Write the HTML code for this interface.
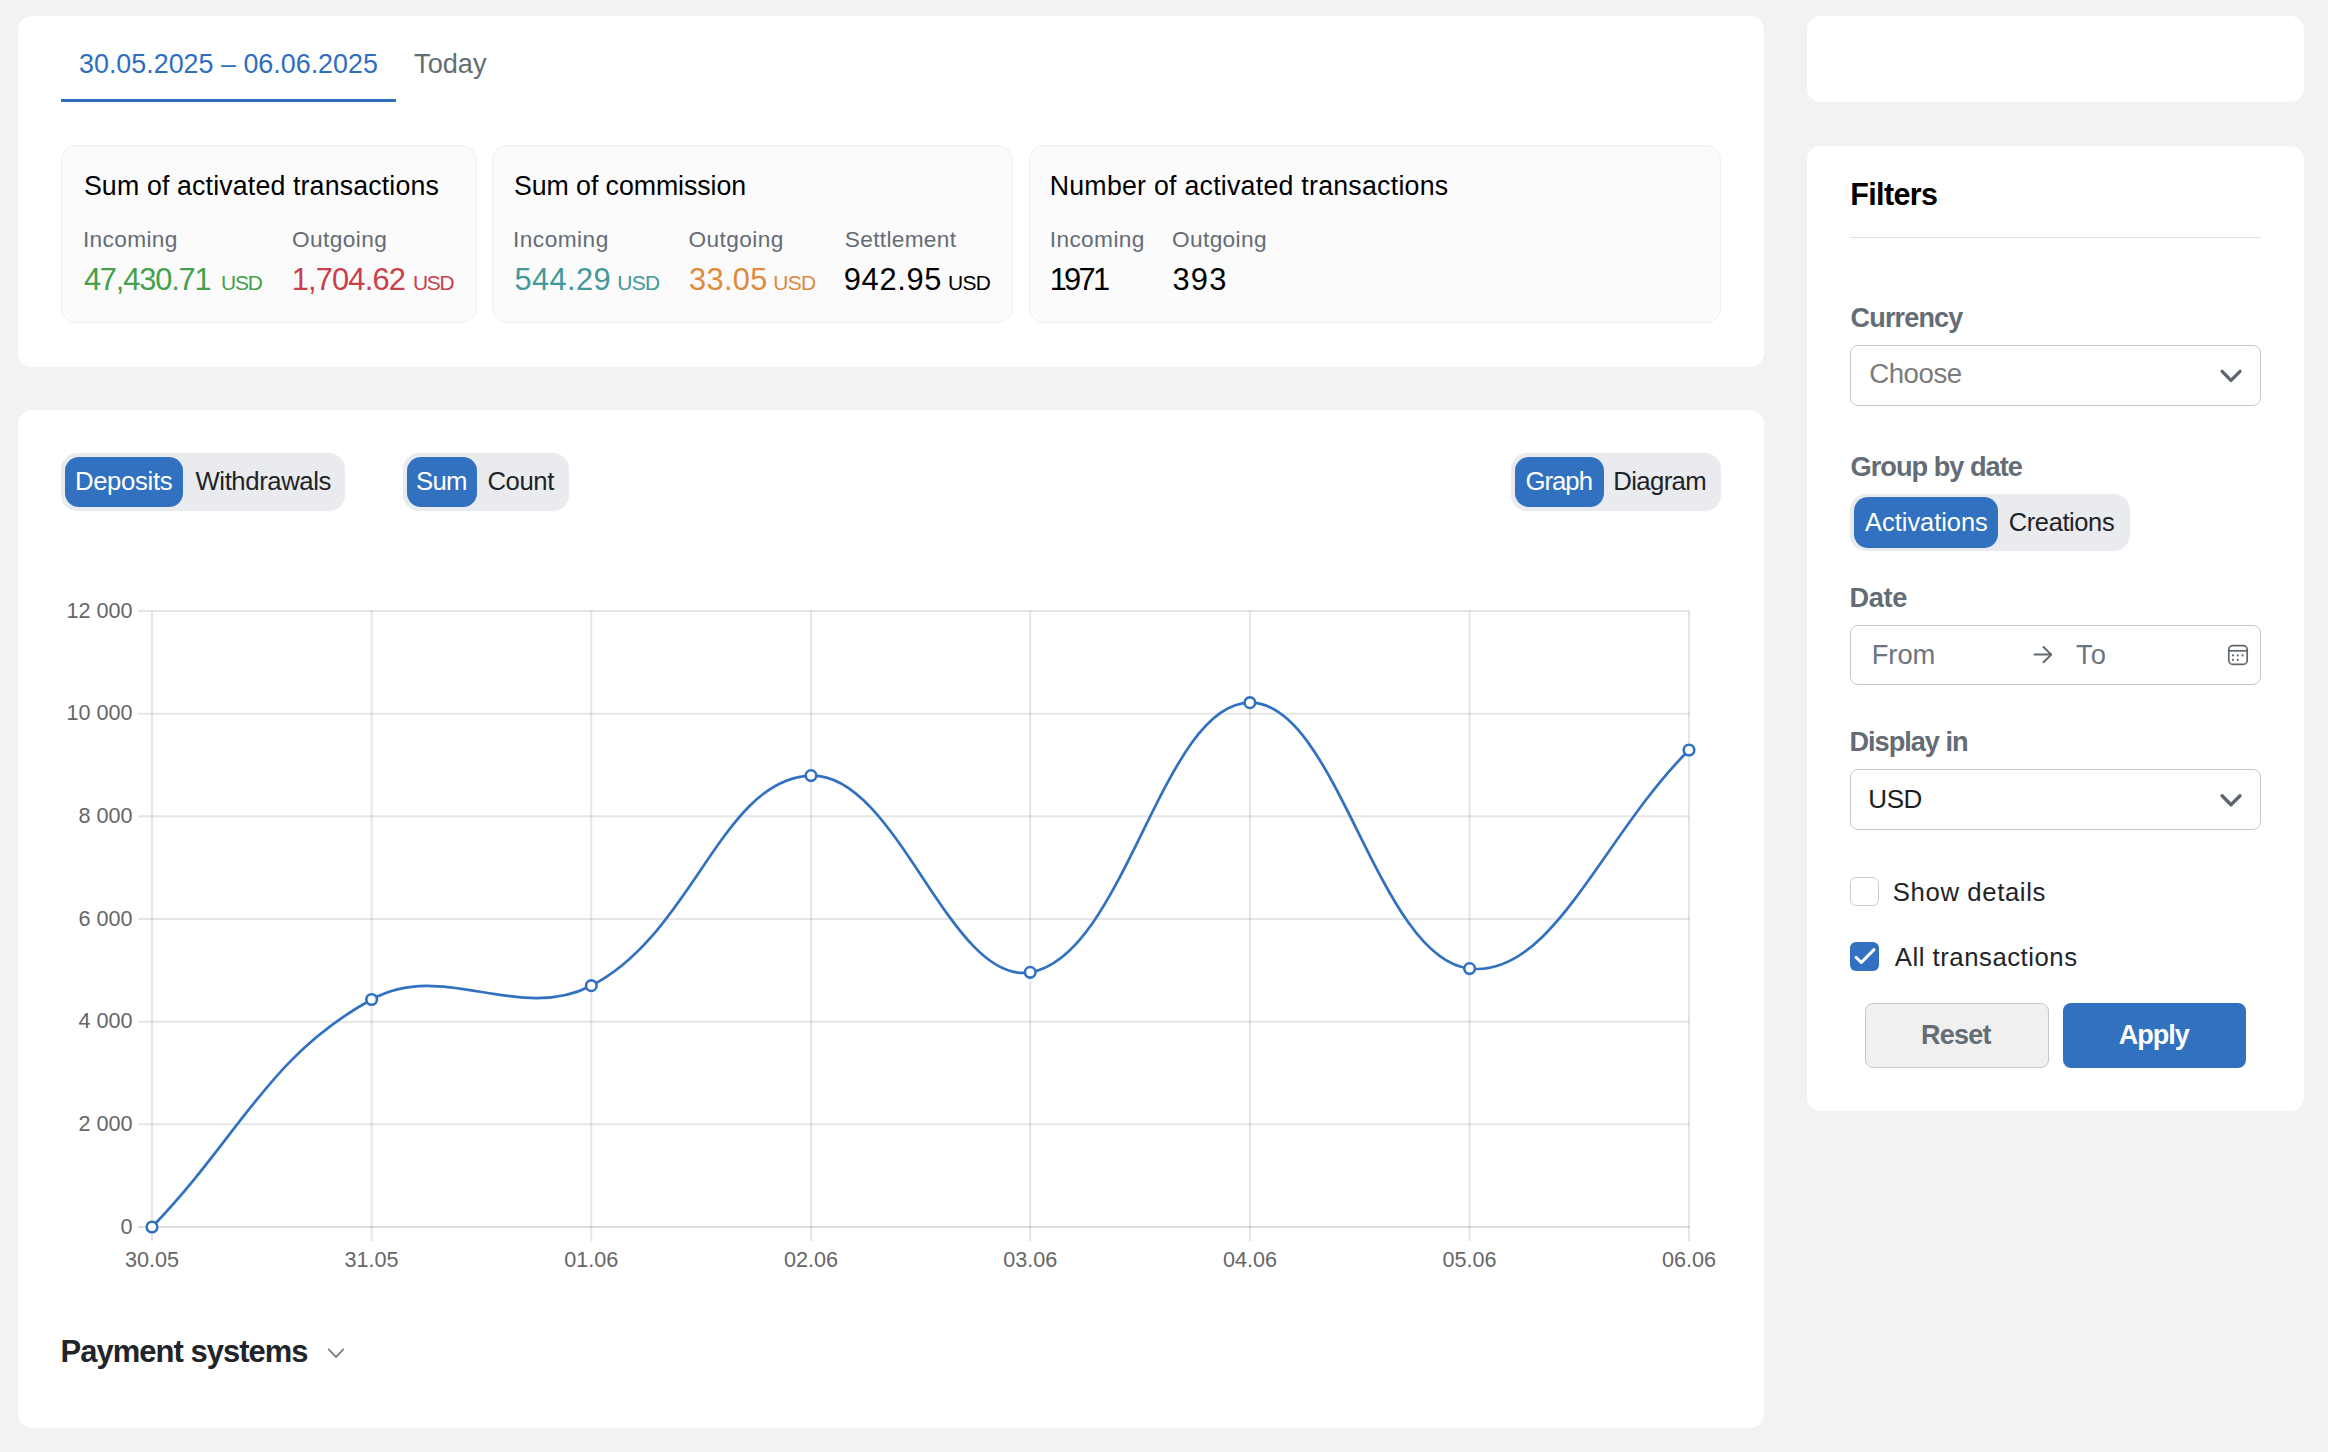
<!DOCTYPE html>
<html><head><meta charset="utf-8"><style>
html,body{margin:0;padding:0;width:2328px;height:1452px;overflow:hidden;background:#f1f2f4;}
body{position:relative;font-family:"Liberation Sans",sans-serif;line-height:1;white-space:nowrap;}
div{white-space:nowrap}
@media (max-width:1500px){html{zoom:0.5}}
</style></head><body>
<div style="position:absolute;left:18px;top:16px;width:1746px;height:351px;background:#fff;border-radius:14px;"></div>
<div style="position:absolute;left:18px;top:410px;width:1746px;height:1018px;background:#fff;border-radius:14px;"></div>
<div style="position:absolute;left:1807px;top:16px;width:497px;height:86px;background:#fff;border-radius:14px;"></div>
<div style="position:absolute;left:1807px;top:146px;width:497px;height:965px;background:#fff;border-radius:14px;"></div>
<div style="position:absolute;left:61px;top:99px;width:335px;height:3px;background:#2f6ebf;border-radius:0px;"></div>
<div style="position:absolute;left:61px;top:145px;width:416px;height:178px;background:#fbfbfc;border-radius:15px;box-sizing:border-box;border:1.5px solid #eeeff1;"></div>
<div style="position:absolute;left:492px;top:145px;width:521px;height:178px;background:#fbfbfc;border-radius:15px;box-sizing:border-box;border:1.5px solid #eeeff1;"></div>
<div style="position:absolute;left:1028.5px;top:145px;width:692.5px;height:178px;background:#fbfbfc;border-radius:15px;box-sizing:border-box;border:1.5px solid #eeeff1;"></div>
<div style="position:absolute;left:61px;top:453px;width:284px;height:58px;background:#e9ebef;border-radius:16px;"></div>
<div style="position:absolute;left:403px;top:453px;width:166px;height:58px;background:#e9ebef;border-radius:16px;"></div>
<div style="position:absolute;left:1511px;top:453px;width:210px;height:58px;background:#e9ebef;border-radius:16px;"></div>
<div style="position:absolute;left:1850px;top:494px;width:280px;height:57px;background:#e9ebef;border-radius:16px;"></div>
<div style="position:absolute;left:65px;top:457px;width:118px;height:50px;background:#3171c0;border-radius:14px;"></div>
<div style="position:absolute;left:407px;top:457px;width:70px;height:50px;background:#3171c0;border-radius:14px;"></div>
<div style="position:absolute;left:1515px;top:457px;width:89px;height:50px;background:#3171c0;border-radius:14px;"></div>
<div style="position:absolute;left:1854px;top:497px;width:144px;height:51px;background:#3171c0;border-radius:14px;"></div>
<div style="position:absolute;left:1850px;top:237px;width:411px;height:1.2px;background:#dde0e4;border-radius:0px;"></div>
<div style="position:absolute;left:1850px;top:345px;width:411px;height:61px;background:#fff;border-radius:8px;box-sizing:border-box;border:1.6px solid #c3c8ce;"></div>
<div style="position:absolute;left:1850px;top:625px;width:411px;height:60px;background:#fff;border-radius:8px;box-sizing:border-box;border:1.6px solid #c3c8ce;"></div>
<div style="position:absolute;left:1850px;top:769px;width:411px;height:61px;background:#fff;border-radius:8px;box-sizing:border-box;border:1.6px solid #c3c8ce;"></div>
<div style="position:absolute;left:1850px;top:877px;width:29px;height:29px;background:#fff;border-radius:6px;box-sizing:border-box;border:1.6px solid #c8ccd2;"></div>
<div style="position:absolute;left:1850px;top:942px;width:29px;height:29px;background:#3171c0;border-radius:6px;"></div>
<div style="position:absolute;left:1865px;top:1003px;width:184px;height:64.5px;background:#f0f0f1;border-radius:8px;box-sizing:border-box;border:1.6px solid #c3c7cd;"></div>
<div style="position:absolute;left:2063px;top:1003px;width:183px;height:64.5px;background:#3171c0;border-radius:8px;"></div>
<svg style="position:absolute;left:0;top:0" width="2328" height="1452">
<polyline points="2222.1,371.4 2231,380.4 2240,371.4" fill="none" stroke="#5d656e" stroke-width="3.4" stroke-linecap="round" stroke-linejoin="round"/>
<polyline points="2222.1,795.8 2231,804.8 2240,795.8" fill="none" stroke="#5d656e" stroke-width="3.4" stroke-linecap="round" stroke-linejoin="round"/>
<polyline points="328.8,1349.5 336,1357 343.2,1349.5" fill="none" stroke="#6c737b" stroke-width="1.8" stroke-linecap="round" stroke-linejoin="round"/>
<g fill="none" stroke="#5f666d" stroke-width="2" stroke-linecap="round" stroke-linejoin="round"><line x1="2034.5" y1="654.6" x2="2051" y2="654.6"/><polyline points="2043.5,647 2051.2,654.6 2043.5,662.2"/></g>
<g fill="none" stroke="#5f666d" stroke-width="1.7"><rect x="2228.8" y="645.6" width="18.4" height="18.8" rx="4"/><line x1="2228.8" y1="650.8" x2="2247.2" y2="650.8"/></g>
<circle cx="2233" cy="655.4" r="1.05" fill="#5f666d"/>
<circle cx="2237.8" cy="655.4" r="1.05" fill="#5f666d"/>
<circle cx="2242.6" cy="655.4" r="1.05" fill="#5f666d"/>
<circle cx="2233" cy="659.9" r="1.05" fill="#5f666d"/>
<circle cx="2237.8" cy="659.9" r="1.05" fill="#5f666d"/>
<polyline points="1856,957.3 1861.3,962.5 1874,949.6" fill="none" stroke="#fff" stroke-width="3" stroke-linecap="round" stroke-linejoin="round"/>
<line x1="138" y1="611.0" x2="1689" y2="611.0" stroke="rgba(0,0,0,0.1)" stroke-width="2"/>
<line x1="138" y1="713.6666666666666" x2="1689" y2="713.6666666666666" stroke="rgba(0,0,0,0.1)" stroke-width="2"/>
<line x1="138" y1="816.3333333333334" x2="1689" y2="816.3333333333334" stroke="rgba(0,0,0,0.1)" stroke-width="2"/>
<line x1="138" y1="919.0" x2="1689" y2="919.0" stroke="rgba(0,0,0,0.1)" stroke-width="2"/>
<line x1="138" y1="1021.6666666666667" x2="1689" y2="1021.6666666666667" stroke="rgba(0,0,0,0.1)" stroke-width="2"/>
<line x1="138" y1="1124.3333333333335" x2="1689" y2="1124.3333333333335" stroke="rgba(0,0,0,0.1)" stroke-width="2"/>
<line x1="138" y1="1227.0" x2="1689" y2="1227.0" stroke="rgba(0,0,0,0.14)" stroke-width="2"/>
<line x1="152" y1="611" x2="152" y2="1241" stroke="rgba(0,0,0,0.1)" stroke-width="2"/>
<line x1="371.6" y1="611" x2="371.6" y2="1241" stroke="rgba(0,0,0,0.1)" stroke-width="2"/>
<line x1="591.3" y1="611" x2="591.3" y2="1241" stroke="rgba(0,0,0,0.1)" stroke-width="2"/>
<line x1="811" y1="611" x2="811" y2="1241" stroke="rgba(0,0,0,0.1)" stroke-width="2"/>
<line x1="1030.2" y1="611" x2="1030.2" y2="1241" stroke="rgba(0,0,0,0.1)" stroke-width="2"/>
<line x1="1249.9" y1="611" x2="1249.9" y2="1241" stroke="rgba(0,0,0,0.1)" stroke-width="2"/>
<line x1="1469.6" y1="611" x2="1469.6" y2="1241" stroke="rgba(0,0,0,0.1)" stroke-width="2"/>
<line x1="1689" y1="611" x2="1689" y2="1241" stroke="rgba(0,0,0,0.1)" stroke-width="2"/>
<path d="M152,1227 C239.84,1136.00 268.00,1056.40 371.6,999.5 C443.72,959.88 517.48,1023.32 591.3,985.7 C693.24,933.76 721.83,778.32 811,775.6 C897.39,772.96 949.70,985.67 1030.2,972.3 C1125.26,956.51 1161.66,703.44 1249.9,702.7 C1337.42,701.96 1377.06,958.63 1469.6,968.6 C1552.70,977.55 1601.24,837.44 1689,750" fill="none" stroke="#3171c0" stroke-width="2.7"/>
<circle cx="152" cy="1227" r="5.3" fill="#fff" stroke="#3171c0" stroke-width="2.6"/>
<circle cx="371.6" cy="999.5" r="5.3" fill="#fff" stroke="#3171c0" stroke-width="2.6"/>
<circle cx="591.3" cy="985.7" r="5.3" fill="#fff" stroke="#3171c0" stroke-width="2.6"/>
<circle cx="811" cy="775.6" r="5.3" fill="#fff" stroke="#3171c0" stroke-width="2.6"/>
<circle cx="1030.2" cy="972.3" r="5.3" fill="#fff" stroke="#3171c0" stroke-width="2.6"/>
<circle cx="1249.9" cy="702.7" r="5.3" fill="#fff" stroke="#3171c0" stroke-width="2.6"/>
<circle cx="1469.6" cy="968.6" r="5.3" fill="#fff" stroke="#3171c0" stroke-width="2.6"/>
<circle cx="1689" cy="750" r="5.3" fill="#fff" stroke="#3171c0" stroke-width="2.6"/>
<text x="132.5" y="617.8" text-anchor="end" font-family="Liberation Sans" font-size="21.6" fill="#666666">12 000</text>
<text x="132.5" y="720.4666666666666" text-anchor="end" font-family="Liberation Sans" font-size="21.6" fill="#666666">10 000</text>
<text x="132.5" y="823.1333333333333" text-anchor="end" font-family="Liberation Sans" font-size="21.6" fill="#666666">8 000</text>
<text x="132.5" y="925.8" text-anchor="end" font-family="Liberation Sans" font-size="21.6" fill="#666666">6 000</text>
<text x="132.5" y="1028.4666666666667" text-anchor="end" font-family="Liberation Sans" font-size="21.6" fill="#666666">4 000</text>
<text x="132.5" y="1131.1333333333334" text-anchor="end" font-family="Liberation Sans" font-size="21.6" fill="#666666">2 000</text>
<text x="132.5" y="1233.8" text-anchor="end" font-family="Liberation Sans" font-size="21.6" fill="#666666">0</text>
<text x="152" y="1267" text-anchor="middle" font-family="Liberation Sans" font-size="21.6" fill="#666666">30.05</text>
<text x="371.6" y="1267" text-anchor="middle" font-family="Liberation Sans" font-size="21.6" fill="#666666">31.05</text>
<text x="591.3" y="1267" text-anchor="middle" font-family="Liberation Sans" font-size="21.6" fill="#666666">01.06</text>
<text x="811" y="1267" text-anchor="middle" font-family="Liberation Sans" font-size="21.6" fill="#666666">02.06</text>
<text x="1030.2" y="1267" text-anchor="middle" font-family="Liberation Sans" font-size="21.6" fill="#666666">03.06</text>
<text x="1249.9" y="1267" text-anchor="middle" font-family="Liberation Sans" font-size="21.6" fill="#666666">04.06</text>
<text x="1469.6" y="1267" text-anchor="middle" font-family="Liberation Sans" font-size="21.6" fill="#666666">05.06</text>
<text x="1689" y="1267" text-anchor="middle" font-family="Liberation Sans" font-size="21.6" fill="#666666">06.06</text>
</svg>
<div style="position:absolute;left:79.00px;top:51.00px;font-size:26.890px;font-weight:400;letter-spacing:0.000px;color:#2f6ebf">30.05.2025 – 06.06.2025</div>
<div style="position:absolute;left:414.10px;top:49.90px;font-size:27.181px;font-weight:400;letter-spacing:-0.025px;color:#656c74">Today</div>
<div style="position:absolute;left:83.90px;top:172.70px;font-size:26.745px;font-weight:400;letter-spacing:0.150px;color:#000000">Sum of activated transactions</div>
<div style="position:absolute;left:82.90px;top:228.00px;font-size:22.675px;font-weight:400;letter-spacing:0.371px;color:#646c75">Incoming</div>
<div style="position:absolute;left:291.90px;top:228.00px;font-size:22.675px;font-weight:400;letter-spacing:0.414px;color:#646c75">Outgoing</div>
<div style="position:absolute;left:83.90px;top:265.00px;font-size:30.814px;font-weight:400;letter-spacing:-1.150px;color:#45a04b">47,430.71</div>
<div style="position:absolute;left:220.90px;top:273.00px;font-size:20.931px;font-weight:400;letter-spacing:-1.100px;color:#45a04b">USD</div>
<div style="position:absolute;left:291.70px;top:265.00px;font-size:30.814px;font-weight:400;letter-spacing:-0.814px;color:#c9404b">1,704.62</div>
<div style="position:absolute;left:412.90px;top:273.00px;font-size:20.931px;font-weight:400;letter-spacing:-1.200px;color:#c9404b">USD</div>
<div style="position:absolute;left:514.00px;top:172.70px;font-size:26.745px;font-weight:400;letter-spacing:-0.075px;color:#000000">Sum of commission</div>
<div style="position:absolute;left:513.00px;top:228.00px;font-size:22.675px;font-weight:400;letter-spacing:0.471px;color:#646c75">Incoming</div>
<div style="position:absolute;left:688.40px;top:228.00px;font-size:22.675px;font-weight:400;letter-spacing:0.429px;color:#646c75">Outgoing</div>
<div style="position:absolute;left:844.80px;top:228.00px;font-size:22.675px;font-weight:400;letter-spacing:0.322px;color:#646c75">Settlement</div>
<div style="position:absolute;left:514.50px;top:265.00px;font-size:30.814px;font-weight:400;letter-spacing:0.400px;color:#42999a">544.29</div>
<div style="position:absolute;left:617.20px;top:273.00px;font-size:20.931px;font-weight:400;letter-spacing:-0.650px;color:#42999a">USD</div>
<div style="position:absolute;left:689.00px;top:265.00px;font-size:30.814px;font-weight:400;letter-spacing:0.325px;color:#dd8a3d">33.05</div>
<div style="position:absolute;left:773.30px;top:273.00px;font-size:20.931px;font-weight:400;letter-spacing:-0.650px;color:#dd8a3d">USD</div>
<div style="position:absolute;left:843.80px;top:265.00px;font-size:30.814px;font-weight:400;letter-spacing:0.700px;color:#000000">942.95</div>
<div style="position:absolute;left:948.00px;top:273.00px;font-size:20.931px;font-weight:400;letter-spacing:-0.650px;color:#000000">USD</div>
<div style="position:absolute;left:1049.70px;top:172.80px;font-size:26.745px;font-weight:400;letter-spacing:0.248px;color:#000000">Number of activated transactions</div>
<div style="position:absolute;left:1049.70px;top:228.10px;font-size:22.675px;font-weight:400;letter-spacing:0.400px;color:#646c75">Incoming</div>
<div style="position:absolute;left:1172.00px;top:228.10px;font-size:22.675px;font-weight:400;letter-spacing:0.371px;color:#646c75">Outgoing</div>
<div style="position:absolute;left:1049.70px;top:264.50px;font-size:30.814px;font-weight:400;letter-spacing:-2.700px;color:#000000">1971</div>
<div style="position:absolute;left:1172.50px;top:264.50px;font-size:30.814px;font-weight:400;letter-spacing:1.200px;color:#000000">393</div>
<div style="position:absolute;left:74.90px;top:469.10px;font-size:25.727px;font-weight:400;letter-spacing:-0.329px;color:#ffffff">Deposits</div>
<div style="position:absolute;left:195.50px;top:469.20px;font-size:25.727px;font-weight:400;letter-spacing:-0.420px;color:#1f2328">Withdrawals</div>
<div style="position:absolute;left:416.00px;top:469.20px;font-size:25.727px;font-weight:400;letter-spacing:-0.700px;color:#ffffff">Sum</div>
<div style="position:absolute;left:487.40px;top:469.20px;font-size:25.727px;font-weight:400;letter-spacing:-0.425px;color:#1f2328">Count</div>
<div style="position:absolute;left:1525.40px;top:469.20px;font-size:25.727px;font-weight:400;letter-spacing:-0.975px;color:#ffffff">Graph</div>
<div style="position:absolute;left:1613.30px;top:469.20px;font-size:25.727px;font-weight:400;letter-spacing:-0.633px;color:#1f2328">Diagram</div>
<div style="position:absolute;left:60.60px;top:1337.30px;font-size:30.960px;font-weight:700;letter-spacing:-0.971px;color:#212529">Payment systems</div>
<div style="position:absolute;left:1850.30px;top:178.70px;font-size:30.524px;font-weight:700;letter-spacing:-0.667px;color:#000000">Filters</div>
<div style="position:absolute;left:1850.60px;top:304.80px;font-size:27.035px;font-weight:700;letter-spacing:-0.843px;color:#646c75">Currency</div>
<div style="position:absolute;left:1869.20px;top:360.00px;font-size:27.617px;font-weight:400;letter-spacing:-0.440px;color:#7b7b7b">Choose</div>
<div style="position:absolute;left:1850.60px;top:452.90px;font-size:27.181px;font-weight:700;letter-spacing:-0.992px;color:#646c75">Group by date</div>
<div style="position:absolute;left:1865.10px;top:509.70px;font-size:25.436px;font-weight:400;letter-spacing:-0.020px;color:#ffffff">Activations</div>
<div style="position:absolute;left:2008.80px;top:509.70px;font-size:25.436px;font-weight:400;letter-spacing:-0.375px;color:#1f2328">Creations</div>
<div style="position:absolute;left:1849.50px;top:584.40px;font-size:27.181px;font-weight:700;letter-spacing:-0.367px;color:#646c75">Date</div>
<div style="position:absolute;left:1871.70px;top:641.40px;font-size:27.326px;font-weight:400;letter-spacing:-0.033px;color:#6f757b">From</div>
<div style="position:absolute;left:2076.00px;top:641.40px;font-size:27.326px;font-weight:400;letter-spacing:1.000px;color:#6f757b">To</div>
<div style="position:absolute;left:1849.50px;top:728.10px;font-size:27.181px;font-weight:700;letter-spacing:-1.033px;color:#646c75">Display in</div>
<div style="position:absolute;left:1868.30px;top:785.50px;font-size:26.018px;font-weight:400;letter-spacing:-0.400px;color:#1a1d21">USD</div>
<div style="position:absolute;left:1892.80px;top:879.80px;font-size:25.727px;font-weight:400;letter-spacing:0.609px;color:#212529">Show details</div>
<div style="position:absolute;left:1894.80px;top:944.90px;font-size:25.727px;font-weight:400;letter-spacing:0.520px;color:#212529">All transactions</div>
<div style="position:absolute;left:1921.00px;top:1022.10px;font-size:27.035px;font-weight:700;letter-spacing:-0.750px;color:#646c75">Reset</div>
<div style="position:absolute;left:2118.80px;top:1022.10px;font-size:27.035px;font-weight:700;letter-spacing:-1.025px;color:#ffffff">Apply</div>
</body></html>
